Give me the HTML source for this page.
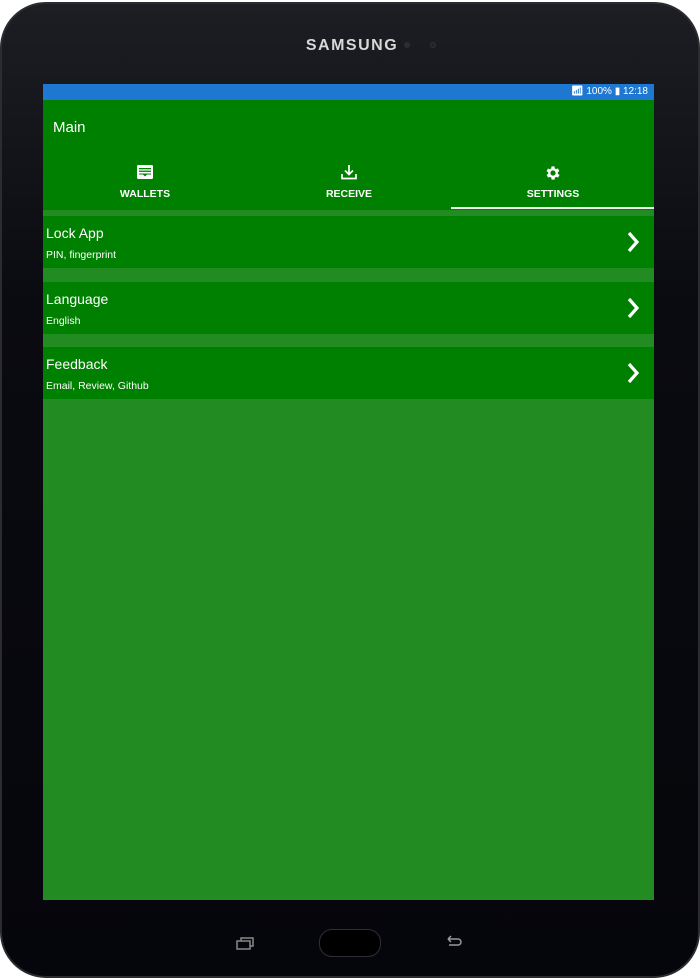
<!DOCTYPE html>
<html><head><meta charset="utf-8"><style>
*{margin:0;padding:0;box-sizing:border-box}
body{width:700px;height:980px;background:#fff;position:relative;overflow:hidden;font-family:"Liberation Sans",sans-serif}
.dev{position:absolute;left:0;top:2px;width:700px;height:976px;border-radius:46px;background:linear-gradient(180deg,#1c1e23 0%,#0a0b10 30%,#05060b 100%);border:2px solid #2a2c31}
.brand{position:absolute;left:0;width:700px;top:33px;text-align:center;color:#d8d8d8;font-weight:bold;font-size:16px;letter-spacing:1.5px}
.dot{position:absolute;width:6px;height:6px;border-radius:50%;background:#2a2d33}
.screen{position:absolute;left:43px;top:84px;width:611px;height:816px;background:#228B22}
.status{height:16px;background:#1e78d2;color:#fff;font-size:10px;text-align:right;padding-right:6px;line-height:16px}
.bar{height:110px;background:#008000;position:relative;color:#fff}
.title{position:absolute;left:10px;top:19px;font-size:15px}
.tab{position:absolute;top:64px;width:204px;text-align:center;font-size:10.5px;font-weight:bold}
.tab svg{display:block;margin:0 auto 8px}
.ul{position:absolute;left:408px;width:203px;top:107px;height:2px;background:#e8f0e8}
.row{position:absolute;left:0;width:611px;height:52px;background:#008000;color:#fff}
.row .h{position:absolute;left:3px;top:9px;font-size:14px}
.row .s{position:absolute;left:3px;top:33px;font-size:10.5px}
.row svg{position:absolute;right:14px;top:15px}
</style></head><body>
<div class="dev">
<div class="brand">SAMSUNG</div>
<div class="dot" style="left:402px;top:38px"></div>
<div class="dot" style="left:428px;top:38px;background:#1f2228;border:1px solid #333"></div>
<svg style="position:absolute;left:234px;top:932px" width="20" height="14" viewBox="0 0 20 14"><rect x="1" y="5" width="13" height="8" fill="none" stroke="#888" stroke-width="1.5"/><path d="M5 5V2h12v8h-3" fill="none" stroke="#888" stroke-width="1.5"/></svg>
<div style="position:absolute;left:317px;top:925px;width:62px;height:28px;border-radius:13px;border:1.5px solid #2e3036;background:#000"></div>
<svg style="position:absolute;left:443px;top:931px" width="20" height="14" viewBox="0 0 20 14"><path d="M3 4h10a3 3 0 0 1 0 6H4M3 4l3-3M3 4l3 3" fill="none" stroke="#999" stroke-width="1.5"/></svg>
</div>
<div class="screen">
<div class="status">&#x1F4F6;&#xFE0E; 100% ▮ 12:18</div>
<div class="bar">
<div class="title">Main</div>
<div class="tab" style="left:0"><svg width="18" height="16" viewBox="0 0 18 16"><rect x="1" y="1" width="16" height="14" rx="1.5" fill="#fff"/><rect x="3" y="4" width="12" height="1.3" fill="#008000"/><rect x="3" y="6.6" width="12" height="1.3" fill="#008000"/><path d="M3 9.5h12v1H11l-2 2-2-2H3z" fill="#008000"/></svg>WALLETS</div>
<div class="tab" style="left:204px"><svg width="18" height="16" viewBox="0 0 18 16"><path d="M9 1v9M5 6.5l4 4 4-4M2 10v4.5h14V10" fill="none" stroke="#fff" stroke-width="1.7"/></svg>RECEIVE</div>
<div class="tab" style="left:408px"><svg width="18" height="18" viewBox="0 0 24 24" style="margin-bottom:6px"><path fill="#fff" d="M19.4 13a7.5 7.5 0 0 0 0-2l2.1-1.6-2-3.5-2.5 1a7 7 0 0 0-1.7-1L15 3.2h-4L10.6 6a7 7 0 0 0-1.7 1l-2.5-1-2 3.5L6.6 11a7.5 7.5 0 0 0 0 2l-2.1 1.6 2 3.5 2.5-1a7 7 0 0 0 1.7 1l.4 2.7h4l.4-2.7a7 7 0 0 0 1.7-1l2.5 1 2-3.5zM13 15.5a3.5 3.5 0 1 1 0-7 3.5 3.5 0 0 1 0 7z" transform="translate(-1 0)"/></svg>SETTINGS</div>
<div class="ul"></div>
</div>
<div class="row" style="top:132px"><div class="h">Lock App</div><div class="s">PIN, fingerprint</div><svg width="14" height="22" viewBox="0 0 14 22"><path d="M3 2l8 9-8 9" fill="none" stroke="#fff" stroke-width="3.2"/></svg></div>
<div class="row" style="top:198px"><div class="h">Language</div><div class="s">English</div><svg width="14" height="22" viewBox="0 0 14 22"><path d="M3 2l8 9-8 9" fill="none" stroke="#fff" stroke-width="3.2"/></svg></div>
<div class="row" style="top:263px"><div class="h">Feedback</div><div class="s">Email, Review, Github</div><svg width="14" height="22" viewBox="0 0 14 22"><path d="M3 2l8 9-8 9" fill="none" stroke="#fff" stroke-width="3.2"/></svg></div>
</div>
</body></html>
